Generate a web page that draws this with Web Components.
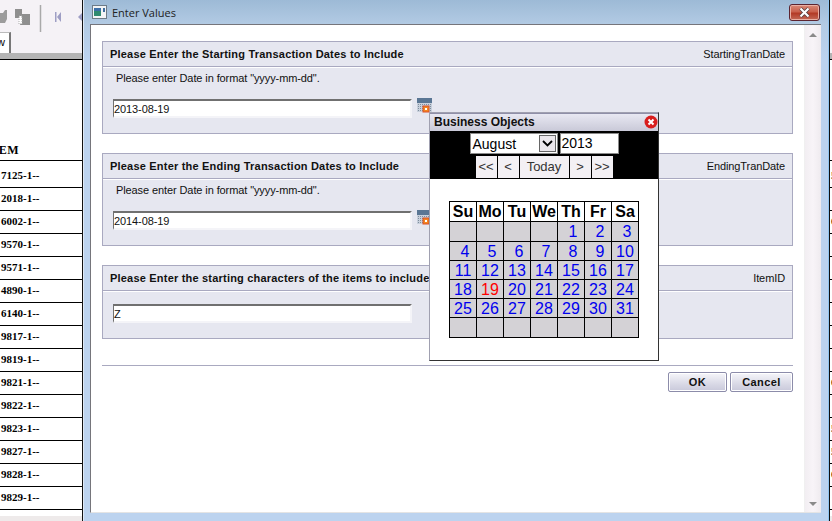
<!DOCTYPE html>
<html>
<head>
<meta charset="utf-8">
<title>Enter Values</title>
<style>
html, body { margin: 0; padding: 0; background: #fff; overflow: hidden; }
body { font-family: "Liberation Sans", sans-serif; }
</style>
</head>
<body>
<report-page>
	<report-back slot="left" side="left"></report-back>
	<dialog-window slot="window" caption="Enter Values">
		<param-panel heading="Please Enter the Starting Transaction Dates to Include" name="StartingTranDate" hint='Please enter Date in format "yyyy-mm-dd".' value="2013-08-19" picker></param-panel>
		<param-panel heading="Please Enter the Ending Transaction Dates to Include" name="EndingTranDate" hint='Please enter Date in format "yyyy-mm-dd".' value="2014-08-19" picker></param-panel>
		<param-panel heading="Please Enter the starting characters of the items to include" name="ItemID" value="Z"></param-panel>
		<dialog-actions></dialog-actions>
	</dialog-window>
	<report-back slot="right" side="right"></report-back>
	<calendar-popup slot="popup" month="August" year="2013" today="19"></calendar-popup>
</report-page>

<script>
(function() {
	"use strict";

	class ReportPage extends HTMLElement {
		constructor() {
			super();
			this.attachShadow({ mode: "open" }).innerHTML = `
			<style>
				:host { display: grid; grid-template-columns: 83px 746px 3px; width: 832px; height: 521px; position: relative; overflow: hidden; }
				.popup { position: absolute; left: 429px; top: 112px; }
			</style>
			<slot name="left"></slot>
			<slot name="window"></slot>
			<slot name="right"></slot>
			<div class="popup"><slot name="popup"></slot></div>`;
		}
	}

	// the report behind the dialog, only its edges are visible
	const ITEMS = ["7125", "2018", "6002", "9570", "9571", "4890", "6140", "9817", "9819", "9821", "9822", "9823", "9827", "9828", "9829"];
	const RIGHT_MARKS = { 0: "5", 2: "0", 9: "0", 11: "5", 12: "5", 13: "0" };

	class ReportBack extends HTMLElement {
		connectedCallback() {
			const left = this.getAttribute("side") === "left";
			const rows = ITEMS.map((item, i) => {
				const text = left ? item + "-1--" : (RIGHT_MARKS[i] || "");
				return `<div class="row${i === 0 ? " first" : ""}"><span>${text}</span></div>`;
			}).join("");
			const tools = left ? `
				<div class="tools">
					<svg width="83" height="32" viewBox="0 0 83 32">
						<path d="M0 13h3l2-3h2v9l-2 4H0z" fill="#9c9c9c"/>
						<path d="M15 9h7v5h8v11H20v-7h-5z" fill="#8f8f8f"/>
						<path d="M19 16h3v8h-3z" fill="#fff" stroke="#aaa" stroke-dasharray="1 1"/>
						<path d="M40.5 5v27" stroke="#a9a9a9" stroke-width="1.5"/>
						<path d="M55 12h1.5v10H55zM61 12v10l-4-5z" fill="#9e9ec4"/>
						<path d="M83 12v10l-5-5z" fill="#9e9ec4"/>
					</svg>
					<div class="tab">w</div>
				</div>` : `<div class="tools"></div>`;
			this.attachShadow({ mode: "open" }).innerHTML = `
			<style>
				:host { display: flex; flex-direction: column; height: 521px; overflow: hidden; box-sizing: border-box; background: #fff;
					font: bold 11px "Liberation Serif", serif; color: #000; }
				:host([side="left"]) { border-right: 1px solid #111; }
				:host([side="right"]) { border-left: 1px solid #111; }
				.tools { height: 53px; background: #f5f2f6; position: relative; flex: none; }
				svg { display: block; }
				.tab { position: absolute; left: -3px; top: 32px; width: 14px; height: 21px; box-sizing: border-box; padding-right: 5px; background: #fff; border-top: 1px solid #bbb; border-right: 2px solid #777;
					font: 11px "Liberation Sans", sans-serif; line-height: 19px; text-align: right; }
				.strip { height: 6px; background: #b4b4b4; border-bottom: 1px solid #000; flex: none; }
				.head { height: 101px; display: flex; align-items: flex-end; flex: none; border-bottom: 1px solid #000; box-sizing: border-box; }
				.head span { margin-left: -15px; padding-bottom: 2px; font-size: 12px; letter-spacing: .5px; white-space: nowrap; }
				.row { height: 23px; box-sizing: border-box; border-bottom: 1px solid #000; line-height: 21px; padding-left: 1px; white-space: nowrap; flex: none; }
				.row.first { height: 27px; line-height: 28px; }
				.foot { flex: 1; background: #fff; }
				.bar { height: 5px; background: #eeeaea; flex: none; }
			</style>
			${tools}
			<div class="strip"></div>
			<div class="head"><span>${left ? "ITEM" : ""}</span></div>
			${rows}
			<div class="foot"></div>
			<div class="bar"></div>`;
		}
	}

	class DialogWindow extends HTMLElement {
		connectedCallback() {
			this.attachShadow({ mode: "open" }).innerHTML = `
			<style>
				:host { display: flex; flex-direction: column; height: 521px; box-sizing: border-box; padding: 0 7px 8px 6px;
					background: linear-gradient(#9dbad6 0, #b3cbe4 25px, #bcd3ef 60px); border-left: 1px solid #dfe9f5; border-right: 1px solid #8fc4f0; }
				.title { height: 24px; display: flex; align-items: center; flex: none; color: #222; font: 11px "Open Sans", sans-serif; position: relative; }
				.title svg.app { margin: 0 5px 0 2px; }
				.close { position: absolute; right: 1px; top: 4px; width: 31px; height: 17px; box-sizing: border-box; border: 1px solid #5c2430; border-radius: 3px;
					background: linear-gradient(#d98a78 0, #c9604c 45%, #b33a26 55%, #c46a58 100%); display: flex; align-items: center; justify-content: center; box-shadow: inset 0 0 0 1px #e9b0a4; }
				.client { flex: 1; display: flex; min-height: 0; border-top: 1px solid #75757b; border-left: 1px solid #75757b; border-bottom: 1px solid #e4e4e4; }
				.content { flex: 1; background: #fff; padding: 16px 11px 0 11px; display: flex; flex-direction: column; gap: 19px; min-width: 0; }
				.scroll { width: 17px; flex: none; background: linear-gradient(90deg, #f2eef2, #f8f4f8 50%, #efebef); border-left: 1px solid #f0f0f0; box-sizing: border-box; position: relative;
					display: flex; flex-direction: column; justify-content: space-between; align-items: center; padding: 8px 0 6px; }
				.scroll i { display: block; width: 0; height: 0; border: 4px solid transparent; }
				.up { border-bottom: 4px solid #8a8a8a !important; border-top: 0 !important; }
				.down { border-top: 4px solid #8a8a8a !important; border-bottom: 0 !important; }
			</style>
			<div class="title">
				<svg class="app" width="15" height="14" viewBox="0 0 15 14">
					<rect x=".5" y=".5" width="14" height="13" fill="#f2f4f6" stroke="#6d7b88"/>
					<rect x="2" y="3" width="7" height="8" fill="#2f8a70"/>
					<rect x="2" y="3" width="7" height="3" fill="#3c6fa8"/>
					<rect x="11" y="3" width="2" height="4" fill="#3f6d9e"/>
				</svg>
				<span>${this.getAttribute("caption")}</span>
				<div class="close">
					<svg width="13" height="11" viewBox="0 0 13 11"><path d="M2.5 1.5l8 8M10.5 1.5l-8 8" stroke="#4a3a3e" stroke-width="3.6"/><path d="M2.5 1.5l8 8M10.5 1.5l-8 8" stroke="#fff" stroke-width="2.2"/></svg>
				</div>
			</div>
			<div class="client">
				<div class="content"><slot></slot></div>
				<div class="scroll"><i class="up"></i><i class="down"></i></div>
			</div>`;
		}
	}

	class ParamPanel extends HTMLElement {
		connectedCallback() {
			const hint = this.getAttribute("hint");
			const picker = this.hasAttribute("picker");
			this.attachShadow({ mode: "open" }).innerHTML = `
			<style>
				:host { display: block; border: 1px solid #a9a9c0; background: #e6e7f0; font: 11px "Liberation Sans", sans-serif; letter-spacing: -.1px; color: #111; }
				.head { height: 24px; display: flex; align-items: center; justify-content: space-between; padding: 0 7px; border-bottom: 1px solid #a9a9c0; box-shadow: 0 1px 0 #fff; box-sizing: content-box; }
				.head b { letter-spacing: .2px; white-space: nowrap; }
				.body { padding: 4px 0 15px 10px; }
				.hint { height: 14px; line-height: 14px; margin: 0 0 14px 3px; }
				.field { display: flex; align-items: flex-start; gap: 5px; }
				.input { width: 299px; height: 19px; box-sizing: border-box; background: #fff; border: 2px solid #f4f4f8; border-top-color: #707070; border-left-color: #707070;
					border-left-width: 1px; padding-left: 0; line-height: 16px; }
				svg { display: block; margin-top: -1px; }
			</style>
			<div class="head"><b>${this.getAttribute("heading")}</b><span>${this.getAttribute("name")}</span></div>
			<div class="body" style="${hint ? "" : "padding-top:13px;padding-bottom:15px"}">
				${hint ? `<div class="hint">${hint.replace(/"/g, "&quot;")}</div>` : ""}
				<div class="field">
					<div class="input">${this.getAttribute("value")}</div>
					${picker ? `<svg width="15" height="15" viewBox="0 0 15 15">
						<rect x="0" y="0" width="15" height="14" fill="#c8d0dc"/>
						<rect x="0" y="0" width="15" height="5" fill="#5a7694"/>
						<path d="M1 6.5h13M1 8.5h13M1 10.5h13M1 12.5h13" stroke="#7f8d9d" stroke-dasharray="1 1"/>
						<rect x="6" y="8" width="6" height="6" fill="#f5861f" stroke="#d8502a"/>
						<rect x="8" y="10" width="2" height="2" fill="#fff"/>
					</svg>` : ""}
				</div>
			</div>`;
		}
	}

	class DialogActions extends HTMLElement {
		constructor() {
			super();
			this.attachShadow({ mode: "open" }).innerHTML = `
			<style>
				:host { display: block; border-top: 1px solid #a9a9c0; margin-top: 7px; padding-top: 6px; }
				.row { display: flex; justify-content: flex-end; gap: 3px; }
			</style>
			<div class="row"><bo-button style="width:59px">OK</bo-button><bo-button style="width:63px">Cancel</bo-button></div>`;
		}
	}

	class BoButton extends HTMLElement {
		constructor() {
			super();
			this.attachShadow({ mode: "open" }).innerHTML = `
			<style>
				:host { display: flex; align-items: center; justify-content: center; height: 20px; box-sizing: border-box; border: 1px solid #8c8caa; border-radius: 2px;
					background: linear-gradient(#f6f6fa, #d9d9e6 60%, #c9c9da); box-shadow: inset 0 0 0 1px #fff; font: bold 11px "Liberation Sans", sans-serif; letter-spacing: .4px; color: #111; }
			</style>
			<slot></slot>`;
		}
	}

	class CalendarPopup extends HTMLElement {
		connectedCallback() {
			const today = +this.getAttribute("today");
			const days = ["Su", "Mo", "Tu", "We", "Th", "Fr", "Sa"];
			// August 2013 starts on a Thursday
			let cells = days.map(d => `<div class="day">${d}</div>`).join("");
			for (let i = 0; i < 42; i++) {
				const n = i - 3;
				const txt = n >= 1 && n <= 31 ? n : "";
				const cls = "date" + (n === today ? " today" : "") + (n >= 1 && n <= 9 ? " one" : "");
				cells += `<div class="${cls}">${txt}</div>`;
			}
			const nav = [["&lt;&lt;", 21], ["&lt;", 21], ["Today", 49], ["&gt;", 21], ["&gt;&gt;", 21]]
				.map(b => `<div class="nav" style="width:${b[1]}px">${b[0]}</div>`).join("");
			this.attachShadow({ mode: "open" }).innerHTML = `
			<style>
				:host { display: block; width: 230px; height: 249px; box-sizing: border-box; background: #fff; border: 1px solid #a0a0b0; border-right: 1px solid #333; border-bottom: 1px solid #333;
					font: 14px "Liberation Sans", sans-serif; color: #000; }
				.title { height: 18px; display: flex; align-items: center; justify-content: space-between; padding: 0 0 1px 4px; background: linear-gradient(#e8e8f2, #c9c9d8); border-top: 1px solid #8f8fa8; box-sizing: border-box;
					font-weight: bold; font-size: 12px; color: #111; }
				.ctl { background: #000; height: 48px; display: flex; flex-direction: column; align-items: center; padding-top: 2px; box-sizing: border-box; gap: 2px; }
				.line { display: flex; gap: 1px; }
				.line.top { gap: 2px; }
				.sel { width: 88px; height: 21px; box-sizing: border-box; background: #fff; border: 1px solid #8a8a8a; display: flex; align-items: center; justify-content: space-between; padding-left: 2px; }
				.sel i { width: 17px; height: 17px; background: #ebe7ec; border: 1px solid #666; box-sizing: border-box; display: flex; align-items: center; justify-content: center; margin-right: 1px; }
				.year { width: 59px; height: 21px; box-sizing: border-box; background: #fff; border: 1px solid #8a8a8a; padding-left: 1px; line-height: 19px; }
				.nav { height: 22px; background: #f3f0f4; text-align: center; line-height: 22px; box-sizing: border-box; font-size: 13px; color: #333; }
				.cal { display: grid; grid-template-columns: repeat(7, 26px); grid-template-rows: 19px 19px 18px 18px 18px 18px 19px; gap: 1px; width: 190px; height: 137px; box-sizing: border-box;
					margin: 22px 0 0 19px; padding: 1px; background: #000; font-size: 16px; }
				.day { background: #fff; font-weight: bold; text-align: center; line-height: 20px; white-space: nowrap; overflow: hidden; }
				.date { background: #d4d2d6; color: #0000ee; text-align: center; line-height: 20px; }
				.date.one { padding-left: 4px; }
				.today { color: #ff0000; }
			</style>
			<div class="title"><span>Business Objects</span>
				<svg width="14" height="14" viewBox="0 0 14 14"><circle cx="7" cy="7" r="6.5" fill="#d81e1e"/><path d="M4.5 4.5l5 5M9.5 4.5l-5 5" stroke="#fff" stroke-width="2"/></svg>
			</div>
			<div class="ctl">
				<div class="line top">
					<div class="sel"><span>${this.getAttribute("month")}</span><i><svg width="11" height="7" viewBox="0 0 11 7"><path d="M1 1l4.5 4.5L10 1" fill="none" stroke="#000" stroke-width="1.8"/></svg></i></div>
					<div class="year">${this.getAttribute("year")}</div>
				</div>
				<div class="line">${nav}</div>
			</div>
			<div class="cal">${cells}</div>`;
		}
	}

	customElements.define("report-page", ReportPage);
	customElements.define("report-back", ReportBack);
	customElements.define("dialog-window", DialogWindow);
	customElements.define("param-panel", ParamPanel);
	customElements.define("bo-button", BoButton);
	customElements.define("dialog-actions", DialogActions);
	customElements.define("calendar-popup", CalendarPopup);
})();
</script>
</body>
</html>
